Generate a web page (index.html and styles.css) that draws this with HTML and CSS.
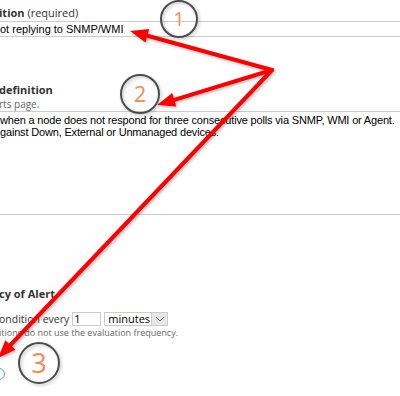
FILE: index.html
```html
<!DOCTYPE html>
<html>
<head>
    <title>Alert definition</title>
    <link rel="stylesheet" href="styles.css">
</head>
<body>
    <div class="form">
        <div class="field field-name">
            <div class="label"><b>ition</b> (required)</div>
            <div class="text-input">ot replying to SNMP/WMI</div>
        </div>

        <div class="field field-desc">
            <div class="label"><b>definition</b></div>
            <div class="hint">rts page.</div>
            <div class="text-area">
                when a node does not respond for three consecutive polls via SNMP, WMI or Agent.<br>
                gainst Down, External or Unmanaged devices.
            </div>
        </div>

        <div class="field field-freq">
            <div class="label"><b>cy of Alert</b></div>
            <div class="freq-row">
                <span>ondition every</span>
                <span class="num-input">1</span>
                <span class="select">
                    <span class="select-value">minutes</span>
                    <span class="select-btn">
                        <svg width="10" height="6" viewBox="0 0 10 6"><path d="M1 1 L5 5 L9 1" fill="none" stroke="#666" stroke-width="1"/></svg>
                    </span>
                </span>
            </div>
            <div class="hint">itions do not use the evaluation frequency.</div>
            <div class="radio"></div>
        </div>
    </div>

    <!-- annotation overlay -->
    <svg class="overlay" width="400" height="396" viewBox="0 0 400 396">
        <defs>
            <filter id="shadow" x="-20%" y="-20%" width="140%" height="140%">
                <feDropShadow dx="1.5" dy="1.5" stdDeviation="1.5" flood-color="#000" flood-opacity="0.25"/>
            </filter>
        </defs>
        <g filter="url(#shadow)">
            <circle cx="179" cy="19" r="18" fill="none" stroke="#4d4d4d" stroke-width="2"/>
            <circle cx="140" cy="94" r="19" fill="none" stroke="#4d4d4d" stroke-width="2"/>
            <circle cx="39" cy="363" r="20" fill="none" stroke="#4d4d4d" stroke-width="2"/>
        </g>
        <g class="nums">
            <text x="179" y="26" font-size="20">1</text>
            <text x="140" y="102" font-size="22">2</text>
            <text x="39" y="373" font-size="27">3</text>
        </g>
        <g filter="url(#shadow)" stroke="#f00" stroke-width="4" stroke-linecap="round" fill="#f00">
            <line x1="272" y1="70" x2="147.4" y2="35.8"/>
            <line x1="272" y1="70" x2="174.2" y2="99.8"/>
            <line x1="272" y1="70" x2="10.4" y2="345"/>
            <polygon stroke="none" points="130,31 145.5,42.5 149.3,29"/>
            <polygon stroke="none" points="157,105 176.3,106.5 172.2,93.1"/>
            <polygon stroke="none" points="-2,358 15.5,349.8 5.3,340.2"/>
        </g>
    </svg>
</body>
</html>
```

FILE: styles.css
```css
* {
    margin: 0;
    padding: 0;
    box-sizing: border-box;
}

body {
    background: #fff;
    font-family: 'Open Sans', Arial, sans-serif;
    color: #333;
    width: 400px;
    height: 396px;
    overflow: hidden;
    position: relative;
}

.form {
    margin-left: -1px;
}

.label {
    font-size: 11px;
    line-height: 16px;
    white-space: nowrap;
}

.label b {
    font-weight: 700;
}

.hint {
    font-size: 9px;
    line-height: 12px;
    color: #666;
    white-space: nowrap;
}

.field-name {
    padding-top: 5px;
}

.text-input {
    margin-left: -10px;
    width: 420px;
    height: 16px;
    border: 1px solid #ccc;
    padding-left: 10px;
    font-family: 'Liberation Sans', Arial, sans-serif;
    font-size: 11px;
    line-height: 14px;
    color: #000;
}

.field-desc {
    margin-top: 45px;
}

.field-desc .hint {
    font-size: 10px;
}

.text-area {
    margin-top: 1px;
    margin-left: -10px;
    width: 420px;
    height: 104px;
    border: 1px solid #ccc;
    padding: 2px 0 0 10px;
    font-family: 'Liberation Sans', Arial, sans-serif;
    font-size: 11px;
    letter-spacing: -0.17px;
    line-height: 12px;
    color: #000;
    white-space: nowrap;
}

.field-freq {
    margin-top: 71px;
}

.freq-row {
    display: flex;
    align-items: center;
    gap: 3px;
    margin-top: 10px;
    height: 14px;
    font-size: 10.5px;
    white-space: nowrap;
}

.num-input {
    width: 29px;
    height: 14px;
    border: 1px solid #ccc;
    font-size: 11px;
    line-height: 12px;
    padding-left: 1px;
    color: #000;
}

.select {
    display: flex;
    width: 64px;
    height: 14px;
    border: 1px solid #ccc;
}

.select-value {
    flex: 1;
    font-size: 11px;
    line-height: 12px;
    padding-left: 3px;
    color: #000;
}

.select-btn {
    width: 16px;
    background: #e6e6e6;
    border-left: 1px solid #ccc;
    display: flex;
    align-items: center;
    justify-content: center;
}

.field-freq .hint {
    margin-top: 1px;
}

.radio {
    margin-top: 29px;
    margin-left: -6px;
    width: 12px;
    height: 12px;
    border: 1px solid #4a9fd8;
    border-radius: 50%;
}

.overlay {
    position: absolute;
    left: 0;
    top: 0;
}

.nums text {
    fill: #f58a58;
    font-family: 'Open Sans', Arial, sans-serif;
    text-anchor: middle;
}
```
